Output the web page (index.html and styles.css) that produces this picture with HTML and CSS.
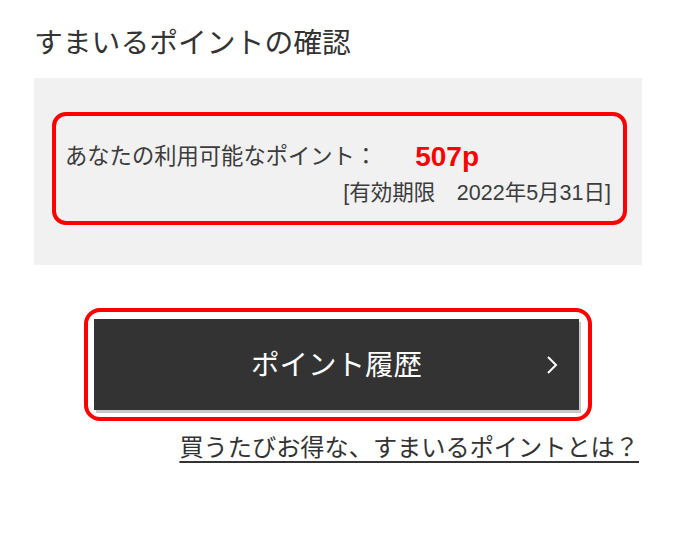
FILE: index.html
```html
<!DOCTYPE html>
<html lang="ja">
<head>
  <meta charset="UTF-8">
  <meta name="viewport" content="width=device-width, initial-scale=1">
  <title>すまいるポイントの確認</title>
  <link rel="stylesheet" href="styles.css">
</head>
<body>
  <div class="page">
    <h1 class="page-title">すまいるポイントの確認</h1>

    <div class="point-box">
      <div class="point-card">
        <div class="point-row">
          <span class="point-label">あなたの利用可能なポイント：</span>
          <span class="point-value">507p</span>
        </div>
        <div class="point-limit">[有効期限　2022年5月31日]</div>
      </div>
    </div>

    <div class="history-frame">
      <a class="history-button" href="#">
        <span class="history-text">ポイント履歴</span>
        <svg class="history-arrow" width="12" height="20" viewBox="0 0 12 20" aria-hidden="true">
          <polyline points="2,2 10,10 2,18" fill="none" stroke="#fff" stroke-width="2"/>
        </svg>
      </a>
    </div>

    <div class="about-row">
      <a class="about-link" href="#">買うたびお得な、すまいるポイントとは？</a>
    </div>
  </div>
</body>
</html>
```

FILE: styles.css
```css
:root {
  --text-color: #333333;
  --box-bg: #f1f1f1;
  --accent-red: #ff0000;
  --button-bg: #333333;
}
body {
  margin: 0;
  background-color: #ffffff;
  color: var(--text-color);
  font-family: "Liberation Sans", "Noto Sans CJK JP", sans-serif;
}
.page {
  padding: 0 33px 0 34px;
}
.page-title {
  margin: 23px 0 15px;
  font-size: 28.8px;
  font-weight: 400;
  line-height: 40px;
  color: var(--text-color);
}
.point-box {
  background-color: var(--box-bg);
  padding: 34px 15px 40px 18px;
}
.point-card {
  border: 4px solid var(--accent-red);
  border-radius: 14px;
  padding: 25px 12px 14px 9px;
}
.point-row {
  display: flex;
  align-items: center;
  line-height: 32px;
}
.point-label {
  font-size: 22.3px;
  color: #3c3c3c;
}
.point-value {
  margin-left: 38px;
  font-size: 28px;
  font-weight: 700;
  color: var(--accent-red);
}
.point-limit {
  margin-top: 6px;
  text-align: right;
  font-size: 21.5px;
  line-height: 28px;
  color: #3c3c3c;
}
.history-frame {
  width: 485px;
  margin: 43px auto 0;
  padding: 7px 9px 7px 6px;
  border: 4px solid var(--accent-red);
  border-radius: 16px;
}
.history-button {
  display: flex;
  align-items: center;
  justify-content: center;
  position: relative;
  height: 91px;
  background-color: var(--button-bg);
  box-shadow: 2px 3px 0 #c9c9c9;
  color: #ffffff;
  text-decoration: none;
}
.history-text {
  font-size: 28.5px;
  line-height: 40px;
}
.history-arrow {
  position: absolute;
  right: 21px;
  top: 36px;
}
.about-row {
  margin-top: 11px;
  text-align: right;
  padding-right: 3px;
}
.about-link {
  font-size: 24.2px;
  line-height: 32px;
  color: var(--text-color);
  text-decoration: underline;
  text-decoration-thickness: 2px;
  text-underline-offset: 5px;
}
```
